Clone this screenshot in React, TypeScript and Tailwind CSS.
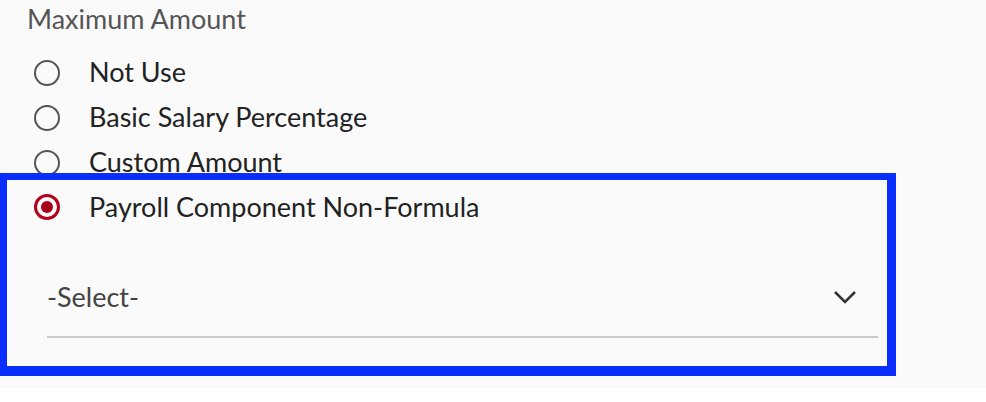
import React from "react";

const options = ["Not Use", "Basic Salary Percentage", "Custom Amount"];

function Radio({ checked }: { checked?: boolean }) {
  if (checked) {
    return (
      <span className="flex h-[26px] w-[26px] shrink-0 items-center justify-center rounded-full border-[3px] border-[#b3001b]">
        <span className="h-[12px] w-[12px] rounded-full bg-[#a8001a]" />
      </span>
    );
  }
  return <span className="h-[26px] w-[26px] shrink-0 rounded-full border-[2.5px] border-[#555]" />;
}

export default function App() {
  return (
    <div className="h-[402px] w-[986px] bg-white" style={{ fontFamily: "Lato, 'Open Sans', sans-serif" }}>
      <div className="h-[388px] bg-[#fafafa]">
        <div className="h-[38px] pl-[27px] text-[27px] leading-[38px] text-[#555]">Maximum Amount</div>
        <div className="mt-[12px] flex flex-col">
          {options.map((o) => (
            <div key={o} className="flex h-[45px] items-center gap-[29px] pl-[34px] text-[27px] text-[#222]">
              <Radio />
              <span>{o}</span>
            </div>
          ))}
        </div>
        {/* highlighted selection */}
        <div className="relative -mt-[12px] h-[203px] w-[896px] border-[7px] border-r-[9px] border-b-[10px] border-[#0a2eff]">
          <div className="flex h-[54px] items-center gap-[29px] pl-[27px] text-[27px] text-[#222]">
            <Radio checked />
            <span>Payroll Component Non-Formula</span>
          </div>
          <div className="ml-[40px] mr-[9px] mt-[47px] flex items-center justify-between border-b-2 border-[#cacaca] pb-[23px]">
            <span className="text-[27px] leading-[32px] text-[#444]">-Select-</span>
            <svg width="24" height="14" viewBox="0 0 24 14" className="mr-[21px]">
              <path d="M2 2l10 10L22 2" fill="none" stroke="#333" strokeWidth="2.6" />
            </svg>
          </div>
        </div>
      </div>
    </div>
  );
}
